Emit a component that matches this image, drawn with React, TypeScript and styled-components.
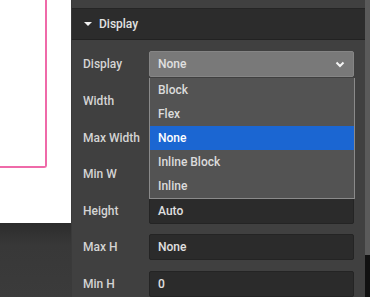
import React from 'react';
import styled, { createGlobalStyle } from 'styled-components';

const GlobalStyle = createGlobalStyle`
  html, body {
    margin: 0;
    padding: 0;
    background: #404040;
    overflow: hidden;
  }
  body {
    font-family: Roboto, "Liberation Sans", sans-serif;
  }
`;

const Screen = styled.div`
  display: flex;
  width: 370px;
  height: 297px;
  overflow: hidden;
`;

const Canvas = styled.div`
  display: flex;
  flex-direction: column;
  width: 71px;
  flex-shrink: 0;
`;

const Frame = styled.div`
  height: 223px;
  background: #ffffff;
`;

const Selection = styled.div`
  width: 45px;
  height: 166px;
  border-right: 2px solid #ef6aa9;
  border-bottom: 2px solid #ef6aa9;
  border-bottom-right-radius: 3px;
`;

const Workspace = styled.div`
  flex: 1;
  background: linear-gradient(#2c2c2c, #383838 30%, #3b3b3b);
`;

const Panel = styled.div`
  flex: 1;
  display: flex;
  flex-direction: column;
  background: #404040;
  border-left: 1px solid #3a3a3a;
`;

const TopStrip = styled.div`
  height: 8px;
  border-bottom: 1px solid #252525;
`;

const SectionHeader = styled.div`
  display: flex;
  align-items: center;
  gap: 7px;
  height: 31px;
  padding-left: 12px;
  background: #2c2c2c;
  border-bottom: 1px solid #222222;
  color: #e2e2e2;
  font-size: 12px;
  font-weight: 500;
`;

const Caret = styled.span`
  width: 0;
  height: 0;
  border-left: 4px solid transparent;
  border-right: 4px solid transparent;
  border-top: 4px solid #f2f2f2;
`;

const Body = styled.div`
  display: flex;
  flex-direction: column;
  gap: 10.6px;
  padding: 11px 11px 0 11px;
`;

const Row = styled.div`
  display: flex;
  align-items: center;
`;

const Label = styled.div`
  width: 66px;
  flex-shrink: 0;
  color: #d4d4d4;
  font-size: 12px;
  font-weight: 500;
`;

const Field = styled.div<{ $tone?: 'select' }>`
  position: relative;
  flex: 1;
  display: flex;
  align-items: center;
  justify-content: space-between;
  box-sizing: border-box;
  height: 26px;
  padding: 0 8px;
  border-radius: 2px;
  background: ${({ $tone }) => ($tone === 'select' ? '#797979' : '#2b2b2b')};
  border: 1px solid ${({ $tone }) => ($tone === 'select' ? '#858585' : '#242424')};
  color: #e0e0e0;
  font-size: 12px;
  font-weight: 500;
`;

const Menu = styled.div`
  position: absolute;
  top: 26px;
  left: -1px;
  right: -2px;
  z-index: 2;
  display: flex;
  flex-direction: column;
  background: #535353;
  border: 1px solid #8a8a8a;
  border-top: none;
`;

const Option = styled.div<{ $active?: boolean }>`
  display: flex;
  align-items: center;
  height: 24px;
  padding-left: 8px;
  background: ${({ $active }) => ($active ? '#1b66d2' : 'transparent')};
  color: ${({ $active }) => ($active ? '#ffffff' : '#dcdcdc')};
`;

const Scrollbar = styled.div`
  display: flex;
  flex-direction: column;
  width: 5px;
  flex-shrink: 0;
  background: #111111;
`;

const Thumb = styled.div`
  height: 255px;
  background: #5a5a5a;
`;

const Chevron = () => (
  <svg width="10" height="7" viewBox="0 0 10 7">
    <polyline points="1.5,1.5 5,5 8.5,1.5" fill="none" stroke="#f4f4f4" strokeWidth="2" />
  </svg>
);

const options = ['Block', 'Flex', 'None', 'Inline Block', 'Inline'];

const fields = [
  { label: 'Width', value: '' },
  { label: 'Max Width', value: '' },
  { label: 'Min W', value: '' },
  { label: 'Height', value: 'Auto' },
  { label: 'Max H', value: 'None' },
  { label: 'Min H', value: '0' },
];

export default function App() {
  return (
    <>
      <GlobalStyle />
      <Screen>
        <Canvas>
          <Frame>
            <Selection />
          </Frame>
          <Workspace />
        </Canvas>
        <Panel>
          <TopStrip />
          <SectionHeader>
            <Caret />
            Display
          </SectionHeader>
          <Body>
            <Row>
              <Label>Display</Label>
              <Field $tone="select">
                None
                <Chevron />
                <Menu>
                  {options.map((o) => (
                    <Option key={o} $active={o === 'None'}>
                      {o}
                    </Option>
                  ))}
                </Menu>
              </Field>
            </Row>
            {fields.map((f) => (
              <Row key={f.label}>
                <Label>{f.label}</Label>
                <Field>{f.value}</Field>
              </Row>
            ))}
          </Body>
        </Panel>
        <Scrollbar>
          <Thumb />
        </Scrollbar>
      </Screen>
    </>
  );
}
